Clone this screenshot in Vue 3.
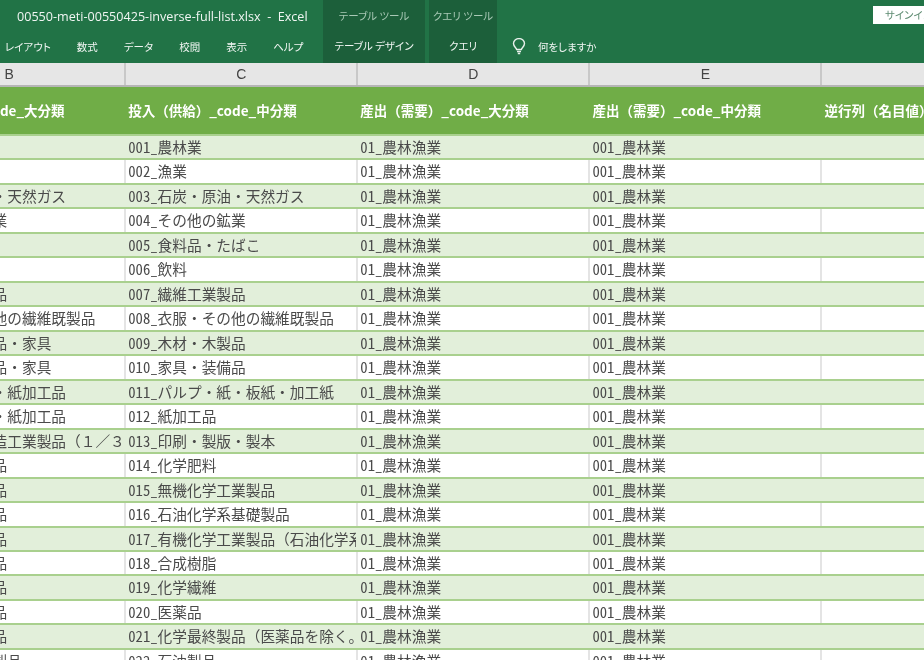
<script setup>
const groups = [
  { code: '01_農林漁業', items: ['001_農林業', '002_漁業'] },
  { code: '02_石炭・原油・天然ガス', items: ['003_石炭・原油・天然ガス'] },
  { code: '03_その他の鉱業', items: ['004_その他の鉱業'] },
  { code: '04_飲食料品', items: ['005_食料品・たばこ', '006_飲料'] },
  { code: '05_繊維工業製品', items: ['007_繊維工業製品'] },
  { code: '06_衣服・その他の繊維既製品', items: ['008_衣服・その他の繊維既製品'] },
  { code: '07_製材・木製品・家具', items: ['009_木材・木製品', '010_家具・装備品'] },
  { code: '08_パルプ・紙・紙加工品', items: ['011_パルプ・紙・板紙・加工紙', '012_紙加工品'] },
  { code: '09_その他の製造工業製品（１／３）', items: ['013_印刷・製版・製本'] },
  {
    code: '10_化学工業製品',
    items: [
      '014_化学肥料',
      '015_無機化学工業製品',
      '016_石油化学系基礎製品',
      '017_有機化学工業製品（石油化学系基礎製品を除く。）',
      '018_合成樹脂',
      '019_化学繊維',
      '020_医薬品',
      '021_化学最終製品（医薬品を除く。）'
    ]
  },
  { code: '11_石油・石炭製品', items: ['022_石油製品'] }
]

const rows = groups.flatMap((g) => g.items.map((item) => ({
  id: item,
  cells: [g.code, item, '01_農林漁業', '001_農林業', '']
})))

const tabs = ['レイアウト', '数式', 'データ', '校閲', '表示', 'ヘルプ']
const columns = ['B', 'C', 'D', 'E', 'F']
const headers = [
  '投入（供給）_code_大分類',
  '投入（供給）_code_中分類',
  '産出（需要）_code_大分類',
  '産出（需要）_code_中分類',
  '逆行列（名目値）'
]

// the number part is half width, the rest full width
function codeOf(text) {
  return text.slice(0, text.indexOf('_') + 1)
}
function nameOf(text) {
  return text.slice(text.indexOf('_') + 1)
}
</script>

<template>
  <div class="app">
    <header class="ribbon">
      <div class="main-part">
        <div class="title">00550-meti-00550425-inverse-full-list.xlsx&nbsp; -&nbsp; Excel</div>
        <nav class="tabs">
          <span v-for="tab in tabs" :key="tab" class="tab">{{ tab }}</span>
        </nav>
      </div>
      <div class="tool table-tool">
        <div class="tool-name">テーブル ツール</div>
        <div class="tool-tab">テーブル デザイン</div>
      </div>
      <div class="tool query-tool">
        <div class="tool-name">クエリ ツール</div>
        <div class="tool-tab">クエリ</div>
      </div>
      <div class="right-part">
        <div class="signin-row"><button class="signin">サインイン</button></div>
        <div class="tell-me">
          <svg class="bulb" width="14" height="17" viewBox="0 0 14 17" fill="none" stroke="#e8f0eb" stroke-width="1.4">
            <path d="M4.6 11.5C4.4 9.8 1.500 8.600 1.500 5.600a5.500 5 0 0 1 11 0c0 3-2.900 4.200-3.100 5.900z" />
            <path d="M5 13.500h4M5.800 15.500h2.400" />
          </svg>
          <span>何をしますか</span>
        </div>
      </div>
    </header>

    <div class="sheet">
      <div class="letters">
        <div v-for="col in columns" :key="col" class="letter">{{ col }}</div>
      </div>
      <div class="head-row">
        <div v-for="h in headers" :key="h" class="head-cell">{{ h }}</div>
      </div>
      <div v-for="(row, i) in rows" :key="row.id" class="row" :class="{ band: i % 2 === 0 }">
        <div v-for="(text, c) in row.cells" :key="c" class="cell"><span class="num">{{ codeOf(text) }}</span>{{ nameOf(text) }}</div>
      </div>
    </div>
  </div>
</template>

<style>
html,
body {
  margin: 0;
  overflow: hidden;
}
</style>

<style scoped>
.app {
  width: 924px;
  height: 660px;
  overflow: hidden;
  background: #fff;
  font-family: "Noto Sans CJK JP", "Noto Sans", sans-serif;
  filter: blur(0.3px);
}

.ribbon {
  display: flex;
  height: 63px;
  background: #217346;
  color: #f1f6f3;
  font-feature-settings: "palt";
}

.main-part {
  width: 323px;
  flex-shrink: 0;
}

.title {
  padding: 9px 0 0 17px;
  height: 24px;
  font-family: "Open Sans", sans-serif;
  font-size: 12.600px;
  line-height: 16px;
  white-space: nowrap;
}

.tabs {
  display: flex;
  gap: 26px;
  padding: 6px 0 0 5px;
  font-size: 10.500px;
  line-height: 16px;
  white-space: nowrap;
}

.tool {
  background: #1c5f3a;
  text-align: center;
  white-space: nowrap;
  font-size: 10.500px;
}

.table-tool {
  width: 102px;
}

.query-tool {
  width: 68px;
  margin-left: 4px;
}

.tool-name {
  height: 24px;
  padding-top: 8px;
  line-height: 16px;
  color: #a9c9b6;
}

.tool-tab {
  padding-top: 6px;
  line-height: 16px;
}

.right-part {
  flex: 1;
  min-width: 0;
}

.signin-row {
  display: flex;
  justify-content: flex-end;
  height: 33px;
  padding-top: 6px;
  box-sizing: border-box;
}

.signin {
  width: 51px;
  height: 18px;
  padding: 0 0 0 12px;
  border: none;
  background: #fff;
  color: #5c8a70;
  font: 10.500px/18px "Noto Sans CJK JP", sans-serif;
  font-feature-settings: "palt";
  text-align: left;
  white-space: nowrap;
  overflow: hidden;
}

.tell-me {
  display: flex;
  align-items: center;
  gap: 12px;
  padding: 5px 0 0 15px;
  font-size: 10.500px;
  line-height: 16px;
}

.sheet {
  margin-left: -107.900px;
  width: 1165px;
}

.letters,
.head-row,
.row {
  display: grid;
  grid-template-columns: repeat(5, 232.100px);
}

.letters {
  height: 24px;
  background: #e6e6e6;
  border-bottom: 2px solid #b5b5b5;
  box-sizing: border-box;
}

.letter {
  border-left: 2px solid #c8c8c8;
  font: 14px/22px "Liberation Sans", sans-serif;
  color: #444;
  text-align: center;
}

.head-row {
  height: 49px;
  box-sizing: border-box;
  background: #70ad47;
  border-bottom: 2px solid #a9d08e;
}

.head-cell {
  padding-left: 4px;
  color: #fff;
  font-size: 13.500px;
  font-weight: 700;
  line-height: 47px;
  white-space: nowrap;
  overflow: hidden;
}

.row {
  height: 24.470px;
  box-sizing: border-box;
  border-bottom: 2px solid #a9d08e;
}

.band {
  background: #e2efda;
}

.cell {
  padding-left: 2px;
  font-size: 14.700px;
  line-height: 22px;
  color: #4a4a4a;
  white-space: nowrap;
  overflow: hidden;
  border-left: 2px solid #e4e4e4;
}

.cell:first-child {
  padding-left: 3px;
}

.num {
  font-feature-settings: "hwid";
}

.band .cell {
  border-left-color: transparent;
}
</style>
